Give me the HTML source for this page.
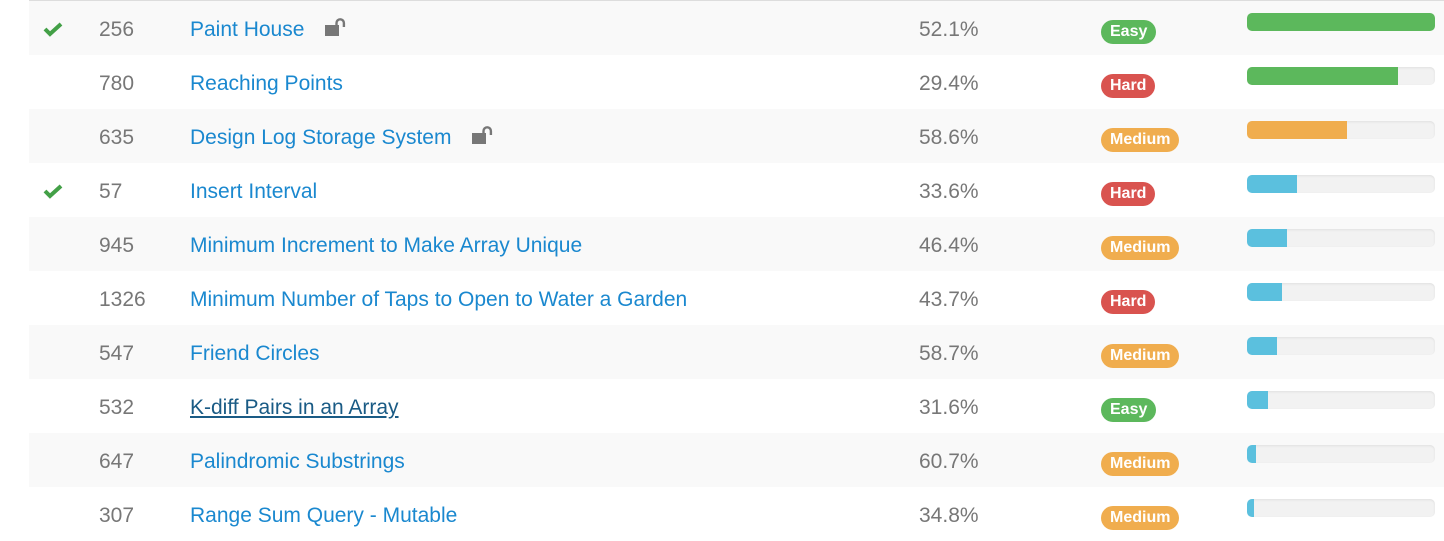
<!DOCTYPE html>
<html><head><meta charset="utf-8"><style>
body{margin:0;width:1444px;height:538px;background:#fff;font-family:"Liberation Sans",Arial,sans-serif;overflow:hidden;position:relative}
.top{position:absolute;left:29px;top:0;width:1415px;height:1px;background:#ddd}
.row{position:absolute;left:29px;width:1415px;height:54px}
.row.g{background:#f9f9f9}
.row span{position:absolute;top:17px;font-size:21px;line-height:24px}
.num{left:70px;color:#777}
.t{left:161px;color:#1a88cf}
.t.u{color:#1a5b85;text-decoration:underline}
.pct{left:890px;color:#777}
.chk{position:absolute;left:14px;top:21px}
.lock{position:absolute;top:17px}
.b{position:absolute;top:19px;left:1072px;height:24px;border-radius:12px;color:#fff;font-weight:bold;font-size:16px;line-height:24px;padding:0 9px}
.easy{background:#5cb85c}.hard{background:#d9534f}.med{background:#f0ad4e}
.bar{position:absolute;left:1218px;top:12px;width:188px;height:18px;border-radius:5px;background:#f2f2f2;box-shadow:inset 0 1px 2px rgba(0,0,0,.08);overflow:hidden}
.bar i{display:block;height:100%;border-radius:4px 0 0 4px}
</style></head><body>
<div class="top"></div>
<div class="row g" style="top:1px"><svg class="chk" width="20" height="15" viewBox="0 0 20 15"><path d="M2 7l5 5L18 2" fill="none" stroke="#43a047" stroke-width="4"/></svg><span class="num">256</span><span class="t">Paint House</span>
<svg class="lock" style="left:296px" width="22" height="20" viewBox="0 0 22 20"><rect x="0" y="7" width="14" height="11" fill="#777"/><path d="M11.5 8V5a3.7 3.7 0 0 1 7.4 0v4" fill="none" stroke="#777" stroke-width="2.4"/></svg>
<span class="pct">52.1%</span><div class="b easy">Easy</div><div class="bar"><i style="width:188px;background:#5cb85c;border-radius:4px"></i></div></div>
<div class="row" style="top:55px"><span class="num">780</span><span class="t">Reaching Points</span><span class="pct">29.4%</span><div class="b hard">Hard</div><div class="bar"><i style="width:151px;background:#5cb85c"></i></div></div>
<div class="row g" style="top:109px"><span class="num">635</span><span class="t">Design Log Storage System</span>
<svg class="lock" style="left:443px" width="22" height="20" viewBox="0 0 22 20"><rect x="0" y="7" width="14" height="11" fill="#777"/><path d="M11.5 8V5a3.7 3.7 0 0 1 7.4 0v4" fill="none" stroke="#777" stroke-width="2.4"/></svg>
<span class="pct">58.6%</span><div class="b med">Medium</div><div class="bar"><i style="width:100px;background:#f0ad4e"></i></div></div>
<div class="row" style="top:163px"><svg class="chk" width="20" height="15" viewBox="0 0 20 15"><path d="M2 7l5 5L18 2" fill="none" stroke="#43a047" stroke-width="4"/></svg><span class="num">57</span><span class="t">Insert Interval</span><span class="pct">33.6%</span><div class="b hard">Hard</div><div class="bar"><i style="width:50px;background:#5bc0de"></i></div></div>
<div class="row g" style="top:217px"><span class="num">945</span><span class="t">Minimum Increment to Make Array Unique</span><span class="pct">46.4%</span><div class="b med">Medium</div><div class="bar"><i style="width:40px;background:#5bc0de"></i></div></div>
<div class="row" style="top:271px"><span class="num">1326</span><span class="t">Minimum Number of Taps to Open to Water a Garden</span><span class="pct">43.7%</span><div class="b hard">Hard</div><div class="bar"><i style="width:35px;background:#5bc0de"></i></div></div>
<div class="row g" style="top:325px"><span class="num">547</span><span class="t">Friend Circles</span><span class="pct">58.7%</span><div class="b med">Medium</div><div class="bar"><i style="width:30px;background:#5bc0de"></i></div></div>
<div class="row" style="top:379px"><span class="num">532</span><span class="t u">K-diff Pairs in an Array</span><span class="pct">31.6%</span><div class="b easy">Easy</div><div class="bar"><i style="width:21px;background:#5bc0de"></i></div></div>
<div class="row g" style="top:433px"><span class="num">647</span><span class="t">Palindromic Substrings</span><span class="pct">60.7%</span><div class="b med">Medium</div><div class="bar"><i style="width:9px;background:#5bc0de"></i></div></div>
<div class="row" style="top:487px"><span class="num">307</span><span class="t">Range Sum Query - Mutable</span><span class="pct">34.8%</span><div class="b med">Medium</div><div class="bar"><i style="width:7px;background:#5bc0de"></i></div></div>
</body></html>
